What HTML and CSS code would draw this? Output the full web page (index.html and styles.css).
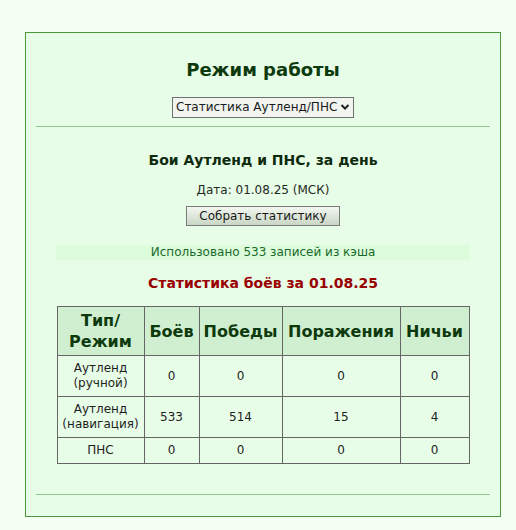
FILE: index.html
```html
<!DOCTYPE html>
<html lang="ru">
<head>
  <meta charset="UTF-8" />
  <title>Статистика боёв</title>
  <link rel="stylesheet" href="styles.css">
</head>
<body>
  <div class="panel">
    <h1>Режим работы</h1>
    <div class="mode">
      <select id="modeSelect">
        <option>Статистика Аутленд/ПНС</option>
      </select>
    </div>
    <hr />

    <h2>Бои Аутленд и ПНС, за день</h2>
    <div class="date">Дата: 01.08.25 (МСК)</div>
    <div class="actions">
      <button onclick="collectStats()">Собрать статистику</button>
    </div>
    <div class="cache-note">Использовано 533 записей из кэша</div>

    <h3>Статистика боёв за 01.08.25</h3>
    <table class="stats">
      <thead>
        <tr>
          <th class="col-type">Тип/<br>Режим</th>
          <th class="col-total">Боёв</th>
          <th class="col-wins">Победы</th>
          <th class="col-loss">Поражения</th>
          <th class="col-draw">Ничьи</th>
        </tr>
      </thead>
      <tbody id="statsBody"></tbody>
    </table>
    <hr class="bottom" />
  </div>

  <script>
    const rows = [
      { type: 'Аутленд<br>(ручной)', total: 0, wins: 0, loss: 0, draw: 0 },
      { type: 'Аутленд<br>(навигация)', total: 533, wins: 514, loss: 15, draw: 4 },
      { type: 'ПНС', total: 0, wins: 0, loss: 0, draw: 0, short: true }
    ];

    function renderStats() {
      document.getElementById('statsBody').innerHTML = rows.map(r => `
        <tr class="${r.short ? 'short' : ''}">
          <td>${r.type}</td>
          <td>${r.total}</td>
          <td>${r.wins}</td>
          <td>${r.loss}</td>
          <td>${r.draw}</td>
        </tr>
      `).join('');
    }

    function collectStats() { renderStats(); }

    renderStats();
  </script>
</body>
</html>
```

FILE: styles.css
```css
body {
  margin: 0;
  padding: 32px 0 0 25px;
  background: #f4fff4;
  font-family: "DejaVu Sans", Verdana, sans-serif;
  color: #1e2a1e;
}
.panel {
  width: 454px;
  padding: 0 10px 21px;
  background: #e8fde8;
  border: 1px solid #4a9a3a;
  text-align: center;
}
h1 {
  margin: 0;
  padding-top: 25px;
  font-size: 18px;
  line-height: 24px;
  color: #0d3a0d;
}
.mode {
  margin-top: 14px;
  height: 20px;
}
.mode select {
  appearance: none;
  box-sizing: border-box;
  height: 21px;
  padding: 0 15px 0 3px;
  font-family: inherit;
  font-size: 12px;
  color: #1a1a1a;
  border: 1px solid #707070;
  border-radius: 0;
  background: #f2f4f0 url("data:image/svg+xml;utf8,<svg xmlns='http://www.w3.org/2000/svg' width='10' height='8' viewBox='0 0 10 8'><path d='M1.5 2 L5 5.5 L8.5 2' fill='none' stroke='%23222' stroke-width='2'/></svg>") no-repeat right 3px center;
}
hr {
  margin: 10px 0 0;
  border: 0;
  border-top: 1px solid #92c892;
}
h2 {
  margin: 23px 0 0;
  font-size: 14px;
  line-height: 20px;
  color: #0d2a0d;
}
.date {
  margin-top: 12px;
  font-size: 12px;
  line-height: 16px;
}
.actions {
  margin-top: 7px;
  height: 20px;
}
.actions button {
  box-sizing: border-box;
  width: 154px;
  height: 20px;
  padding: 0;
  font-family: inherit;
  font-size: 12px;
  color: #1a1a1a;
  border: 1px solid #7a7a7a;
  background: linear-gradient(#f3f7f1, #c9d6c5);
  cursor: pointer;
}
.cache-note {
  margin: 20px 20px 0;
  padding: 0;
  height: 15px;
  line-height: 15px;
  font-size: 12px;
  color: #1a6a2a;
  background: #dcfcdc;
}
h3 {
  margin: 13px 0 0;
  font-size: 14px;
  line-height: 20px;
  color: #990000;
}
.stats {
  margin: 13px auto 0;
  width: 413px;
  border-collapse: collapse;
  font-size: 12px;
  color: #1e1e1e;
}
.stats th,
.stats td {
  border: 1px solid #666;
  padding: 0;
}
.stats th {
  height: 48px;
  font-size: 16px;
  line-height: 21px;
  background: #d0eed0;
  color: #0d3a0d;
}
.stats td {
  height: 40px;
  line-height: 15px;
}
.stats tr.short td {
  height: 25px;
}
.col-type { width: 86px; }
.col-total { width: 54px; }
.col-wins { width: 82px; }
.col-loss { width: 117px; }
hr.bottom {
  margin-top: 30px;
}
```
